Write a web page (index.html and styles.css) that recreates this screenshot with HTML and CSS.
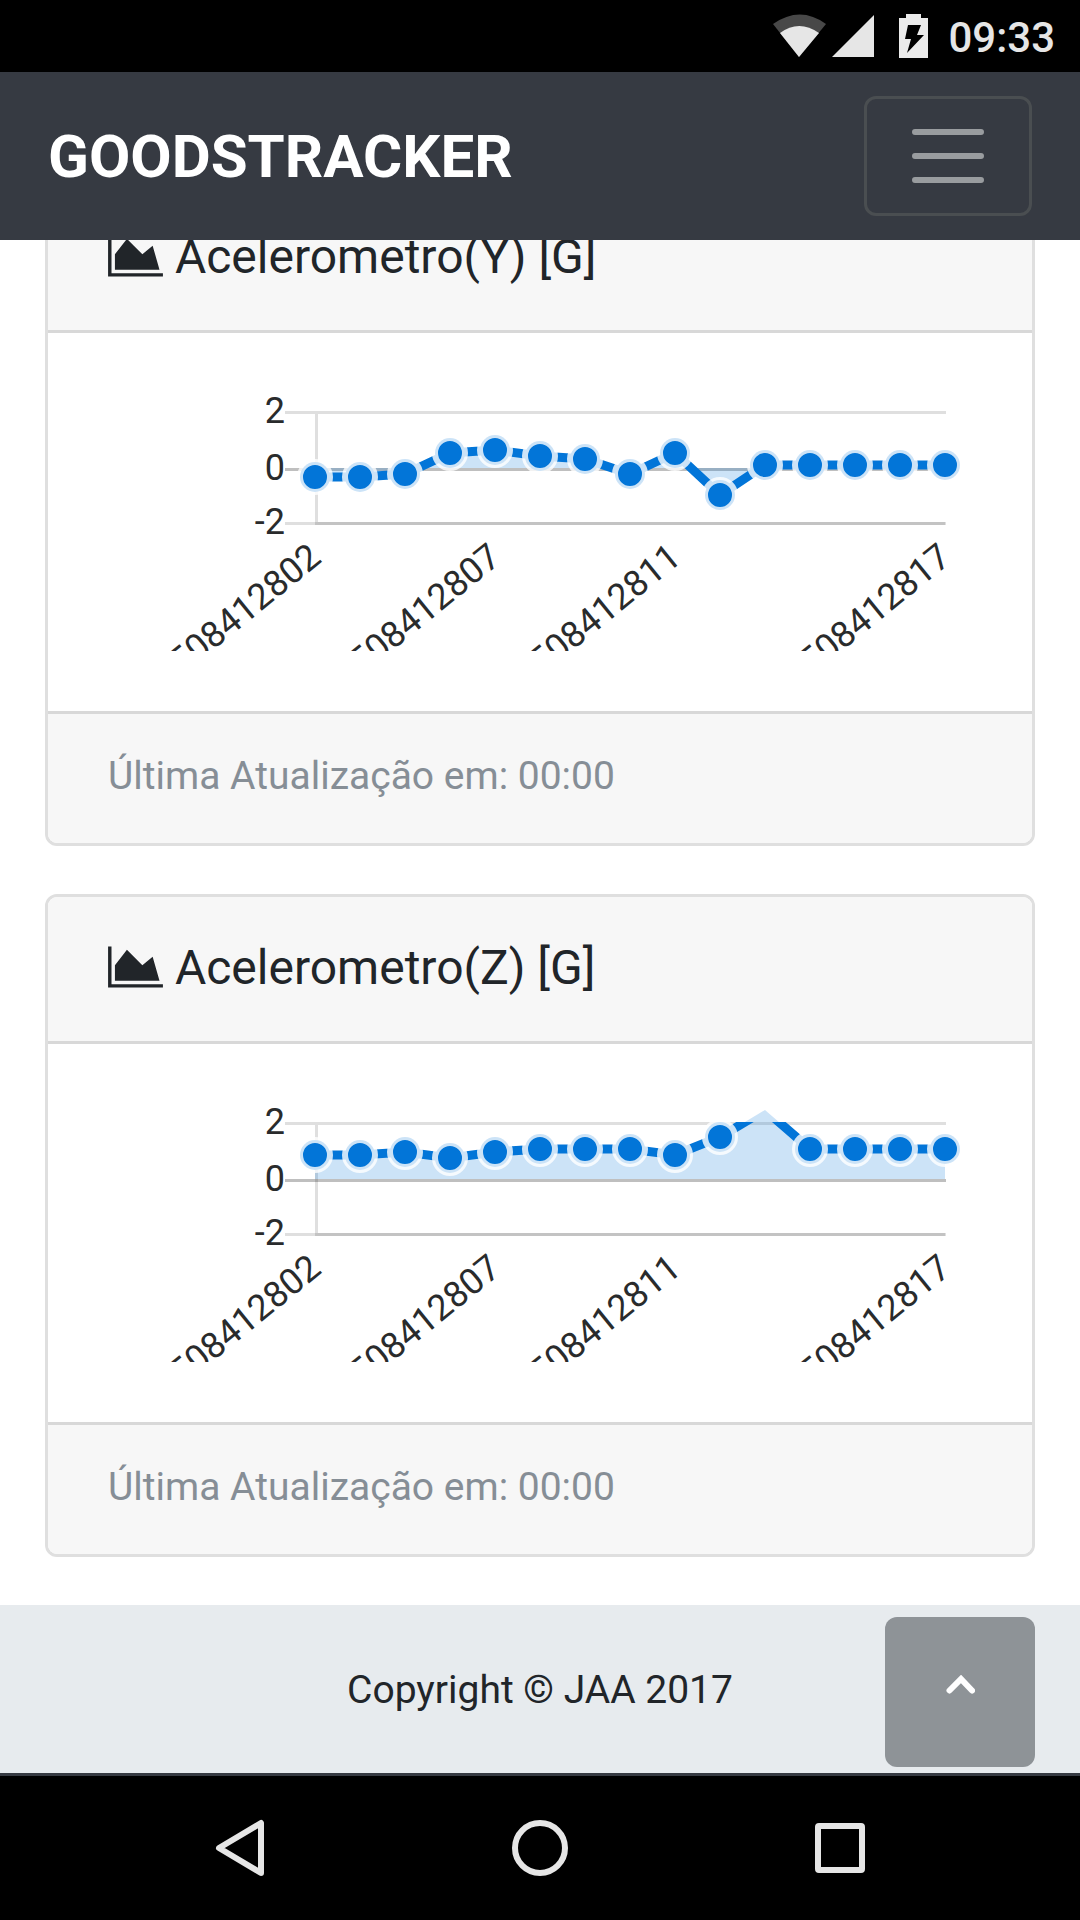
FILE: index.html
```html
<!DOCTYPE html>
<html lang="pt-BR">
<head>
<meta charset="utf-8">
<meta name="viewport" content="width=device-width, initial-scale=1">
<title>GoodsTracker</title>
<link rel="stylesheet" href="styles.css">
</head>
<body>
<div class="status-bar">
  <svg class="status-signals" width="102" height="44" viewBox="0 0 102 44" aria-hidden="true">
    <path fill="#484848" d="M0 10Q27 -9 53 10L26 43Z"/>
    <path fill="#e6e6e6" d="M7 19Q26 5 46 19L26 43Z"/>
    <path fill="#e6e6e6" d="M101 1V43H59Z"/>
  </svg>
  <svg class="status-battery" width="29" height="44" viewBox="0 0 29 44" aria-hidden="true">
    <path fill="#ebebeb" d="M7 0H22V4H29V44H0V4H7Z"/>
    <path fill="#000" d="M9 11H22L18 21H25L8 39L12 25H6Z"/>
  </svg>
  <time class="status-clock">09:33</time>
</div>

<nav class="navbar">
  <a class="navbar-brand" href="#top">GOODSTRACKER</a>
  <button class="navbar-toggler" type="button" aria-label="Menu">
    <svg width="72" height="54" viewBox="0 0 72 54" aria-hidden="true">
      <path stroke="#999c9f" stroke-width="6" stroke-linecap="round" d="M3 3H69M3 27H69M3 51H69"/>
    </svg>
  </button>
</nav>

<main class="content">
  <section class="card">
    <h2 class="card-header"><svg class="chart-icon" viewBox="0 0 2048 1792" aria-hidden="true"><path fill="currentColor" d="M2048 1536v128h-2048v-1536h128v1408h1920zM1664 512l256 896h-1664v-576l448-576 576 576z"/></svg> Acelerometro(Y) [G]</h2>
    <div class="card-body">
      <svg class="chart" viewBox="0 0 864 258" role="img" aria-label="Acelerometro(Y)">
        <defs>
          <clipPath id="plot"><rect x="207" y="18" width="630" height="114"/></clipPath>
        </defs>
        <g class="grid">
          <path d="M177 19.5H838M177 130.5H838M208.5 18V132"/>
          <path d="M207 130.5H837"/>
          <path class="zero" d="M177 76.5H838"/>
        </g>
        <path class="area" d="M207 75V84L252 84L297 81L342 60L387 57L432 63L477 66L522 81L567 60L612 102L657 72L702 72L747 72L792 72L837 72V75Z"/>
        <polyline class="line" clip-path="url(#plot)" points="207,84 252,84 297,81 342,60 387,57 432,63 477,66 522,81 567,60 612,102 657,72 702,72 747,72 792,72 837,72"/>
        <g class="points">
          <circle cx="207" cy="84" r="15"/><circle cx="252" cy="84" r="15"/><circle cx="297" cy="81" r="15"/><circle cx="342" cy="60" r="15"/><circle cx="387" cy="57" r="15"/><circle cx="432" cy="63" r="15"/><circle cx="477" cy="66" r="15"/><circle cx="522" cy="81" r="15"/><circle cx="567" cy="60" r="15"/><circle cx="612" cy="102" r="15"/><circle cx="657" cy="72" r="15"/><circle cx="702" cy="72" r="15"/><circle cx="747" cy="72" r="15"/><circle cx="792" cy="72" r="15"/><circle cx="837" cy="72" r="15"/>
        </g>
        <g class="ticks">
          <text x="177" y="30">2</text><text x="177" y="87">0</text><text x="177" y="141">-2</text>
          <text transform="translate(215 168) rotate(-39)">1508412802</text>
          <text transform="translate(395 168) rotate(-39)">1508412807</text>
          <text transform="translate(575 168) rotate(-39)">1508412811</text>
          <text transform="translate(845 168) rotate(-39)">1508412817</text>
        </g>
      </svg>
    </div>
    <div class="card-footer">Última Atualização em: 00:00</div>
  </section>

  <section class="card">
    <h2 class="card-header"><svg class="chart-icon" viewBox="0 0 2048 1792" aria-hidden="true"><path fill="currentColor" d="M2048 1536v128h-2048v-1536h128v1408h1920zM1664 512l256 896h-1664v-576l448-576 576 576z"/></svg> Acelerometro(Z) [G]</h2>
    <div class="card-body">
      <svg class="chart" viewBox="0 0 864 258" role="img" aria-label="Acelerometro(Z)">
        <g class="grid">
          <path d="M177 19.5H838M177 130.5H838M208.5 18V132"/>
          <path d="M207 130.5H837"/>
          <path class="zero" d="M177 76.5H838"/>
        </g>
        <path class="area" d="M207 75V51L252 51L297 48L342 54L387 48L432 45L477 45L522 45L567 51L612 33L657 6L702 45L747 45L792 45L837 45V75Z"/>
        <polyline class="line" clip-path="url(#plot)" points="207,51 252,51 297,48 342,54 387,48 432,45 477,45 522,45 567,51 612,33 657,6 702,45 747,45 792,45 837,45"/>
        <g class="points">
          <circle cx="207" cy="51" r="15"/><circle cx="252" cy="51" r="15"/><circle cx="297" cy="48" r="15"/><circle cx="342" cy="54" r="15"/><circle cx="387" cy="48" r="15"/><circle cx="432" cy="45" r="15"/><circle cx="477" cy="45" r="15"/><circle cx="522" cy="45" r="15"/><circle cx="567" cy="51" r="15"/><circle cx="612" cy="33" r="15"/><circle cx="702" cy="45" r="15"/><circle cx="747" cy="45" r="15"/><circle cx="792" cy="45" r="15"/><circle cx="837" cy="45" r="15"/>
        </g>
        <g class="ticks">
          <text x="177" y="30">2</text><text x="177" y="87">0</text><text x="177" y="141">-2</text>
          <text transform="translate(215 168) rotate(-39)">1508412802</text>
          <text transform="translate(395 168) rotate(-39)">1508412807</text>
          <text transform="translate(575 168) rotate(-39)">1508412811</text>
          <text transform="translate(845 168) rotate(-39)">1508412817</text>
        </g>
      </svg>
    </div>
    <div class="card-footer">Última Atualização em: 00:00</div>
  </section>
</main>

<footer class="page-footer">
  <small class="copyright">Copyright © JAA 2017</small>
  <a class="scroll-top" href="#top" aria-label="Voltar ao topo">
    <svg width="30" height="20" viewBox="0 0 30 20" aria-hidden="true">
      <path fill="none" stroke="#fff" stroke-width="6" stroke-linecap="round" d="M4.5 15.5L16 4L27 15.5"/>
    </svg>
  </a>
</footer>

<div class="system-nav">
  <button type="button" aria-label="Voltar">
    <svg width="60" height="60" viewBox="0 0 60 60" aria-hidden="true"><path d="M51 5V55L9 30Z"/></svg>
  </button>
  <button type="button" aria-label="Início">
    <svg width="60" height="60" viewBox="0 0 60 60" aria-hidden="true"><circle cx="30" cy="30" r="25"/></svg>
  </button>
  <button type="button" aria-label="Recentes">
    <svg width="60" height="60" viewBox="0 0 60 60" aria-hidden="true"><rect x="8" y="8" width="44" height="44" rx="1"/></svg>
  </button>
</div>
</body>
</html>
```

FILE: styles.css
```css
* {
  box-sizing: border-box;
}

body {
  margin: 0;
  height: 100vh;
  display: flex;
  flex-direction: column;
  background: #fff;
  color: #212529;
  font-family: Roboto, sans-serif;
}

svg {
  display: block;
}

button {
  padding: 0;
  border: 0;
  background: none;
}

/* Android status bar */
.status-bar {
  flex: none;
  display: flex;
  align-items: center;
  justify-content: flex-end;
  height: 72px;
  padding-right: 25px;
  background: #000;
  color: #e6e6e6;
}

.status-battery {
  margin: 0 20px 0 24px;
}

.status-clock {
  padding-top: 2px;
  font-size: 42px;
  font-weight: 500;
}

/* Navigation bar */
.navbar {
  flex: none;
  display: flex;
  align-items: center;
  justify-content: space-between;
  padding: 24px 48px;
  background: #363a42;
}

.navbar-brand {
  padding-top: 2px;
  color: #fff;
  font-size: 60px;
  font-weight: 700;
  line-height: 90px;
  text-decoration: none;
}

.navbar-toggler {
  display: flex;
  padding: 30px 45px;
  border: 3px solid #4a4e51;
  border-radius: 12px;
}

/* Scrolled content, resting at its end */
.content {
  flex: 1;
  min-height: 0;
  display: flex;
  flex-direction: column;
  justify-content: flex-end;
  gap: 48px;
  padding: 0 45px 48px;
  overflow: hidden;
}

.card {
  flex: none;
  border: 3px solid #dfdfdf;
  border-radius: 12px;
  overflow: hidden;
}

.card-header {
  margin: 0;
  padding: 35px 60px 37px;
  border-bottom: 3px solid #d8d8d8;
  background: #f7f7f7;
  font-size: 48px;
  font-weight: 400;
  line-height: 72px;
}

.chart-icon {
  display: inline-block;
  width: 55px;
  height: 48px;
  vertical-align: -7px;
}

.card-body {
  padding: 60px;
}

.card-footer {
  padding: 34px 60px 38px;
  border-top: 3px solid #d8d8d8;
  background: #f7f7f7;
  color: #868e96;
  font-size: 39px;
  line-height: 57px;
}

/* Charts */
.chart {
  width: 100%;
  height: auto;
}

.grid path {
  fill: none;
  stroke: rgba(0, 0, 0, 0.125);
  stroke-width: 3px;
}

.grid .zero {
  stroke: rgba(0, 0, 0, 0.25);
}

.area {
  fill: rgba(2, 117, 216, 0.2);
}

.line {
  fill: none;
  stroke: #0275d8;
  stroke-width: 9px;
}

.points circle {
  fill: #0275d8;
  stroke: rgba(255, 255, 255, 0.8);
  stroke-width: 6px;
}

.ticks text {
  fill: #292b2c;
  font-size: 36px;
  text-anchor: end;
}

/* Page footer */
.page-footer {
  flex: none;
  position: relative;
  display: flex;
  align-items: center;
  justify-content: center;
  height: 171px;
  border-bottom: 3px solid #363a42;
  background: #e7ebee;
}

.copyright {
  padding-top: 3px;
  font-size: 39px;
  line-height: 57px;
}

.scroll-top {
  position: absolute;
  right: 45px;
  bottom: 6px;
  display: flex;
  justify-content: center;
  width: 150px;
  height: 150px;
  padding-top: 58px;
  border-radius: 12px;
  background: #8e9397;
}

/* Android navigation keys */
.system-nav {
  flex: none;
  display: flex;
  height: 144px;
  padding: 0 90px;
  background: #000;
}

.system-nav button {
  flex: 1;
  display: flex;
  align-items: center;
  justify-content: center;
}

.system-nav svg {
  fill: none;
  stroke: #e6e6e6;
  stroke-width: 6px;
  stroke-linejoin: round;
}
```
